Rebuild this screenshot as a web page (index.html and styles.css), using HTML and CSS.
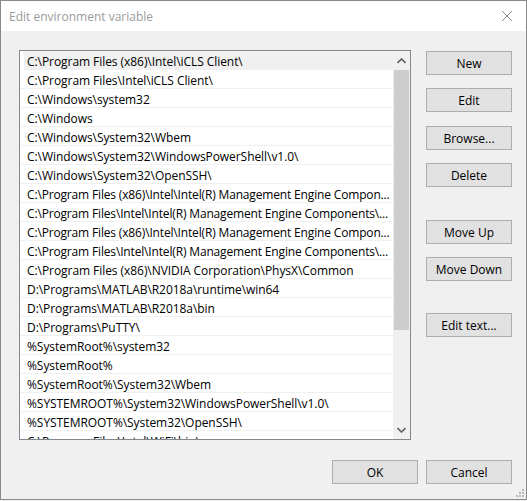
FILE: index.html
```html
<!DOCTYPE html>
<html>
<head>
<meta charset="utf-8">
<link rel="stylesheet" href="styles.css">
</head>
<body>
<div class="window">
  <div class="titlebar">
    <span class="title">Edit environment variable</span>
    <svg class="close" width="12" height="12" viewBox="0 0 12 12"><path d="M1 1 L11 11 M11 1 L1 11" stroke="#8a8a8a" stroke-width="1" fill="none"/></svg>
  </div>
  <div class="content">
    <div class="main">
      <div class="listbox">
        <div class="rows">
          <div class="row sel">C:\Program Files (x86)\Intel\iCLS Client\</div>
          <div class="row">C:\Program Files\Intel\iCLS Client\</div>
          <div class="row">C:\Windows\system32</div>
          <div class="row">C:\Windows</div>
          <div class="row">C:\Windows\System32\Wbem</div>
          <div class="row">C:\Windows\System32\WindowsPowerShell\v1.0\</div>
          <div class="row">C:\Windows\System32\OpenSSH\</div>
          <div class="row tight">C:\Program Files (x86)\Intel\Intel(R) Management Engine Compon...</div>
          <div class="row tight">C:\Program Files\Intel\Intel(R) Management Engine Components\...</div>
          <div class="row tight">C:\Program Files (x86)\Intel\Intel(R) Management Engine Compon...</div>
          <div class="row tight">C:\Program Files\Intel\Intel(R) Management Engine Components\...</div>
          <div class="row">C:\Program Files (x86)\NVIDIA Corporation\PhysX\Common</div>
          <div class="row">D:\Programs\MATLAB\R2018a\runtime\win64</div>
          <div class="row">D:\Programs\MATLAB\R2018a\bin</div>
          <div class="row">D:\Programs\PuTTY\</div>
          <div class="row">%SystemRoot%\system32</div>
          <div class="row">%SystemRoot%</div>
          <div class="row">%SystemRoot%\System32\Wbem</div>
          <div class="row">%SYSTEMROOT%\System32\WindowsPowerShell\v1.0\</div>
          <div class="row">%SYSTEMROOT%\System32\OpenSSH\</div>
          <div class="row">C:\Program Files\Intel\WiFi\bin\</div>
        </div>
        <div class="scrollbar">
          <div class="arrow">
            <svg width="9" height="6" viewBox="0 0 9 6"><path d="M0.5 5 L4.5 1 L8.5 5" stroke="#606060" stroke-width="1.6" fill="none"/></svg>
          </div>
          <div class="track">
            <div class="thumb"></div>
          </div>
          <div class="arrow">
            <svg width="9" height="6" viewBox="0 0 9 6"><path d="M0.5 1 L4.5 5 L8.5 1" stroke="#606060" stroke-width="1.6" fill="none"/></svg>
          </div>
        </div>
      </div>
      <div class="side">
        <button class="btn">New</button>
        <button class="btn g13">Edit</button>
        <button class="btn g14">Browse...</button>
        <button class="btn g13">Delete</button>
        <button class="btn g33">Move Up</button>
        <button class="btn g13">Move Down</button>
        <button class="btn g32">Edit text...</button>
      </div>
    </div>
    <div class="footer">
      <button class="btn">OK</button>
      <button class="btn">Cancel</button>
    </div>
    <div class="grip">
      <svg width="8" height="8" viewBox="0 0 8 8" fill="#b8b8b8">
        <rect x="6" y="0" width="2" height="2"/>
        <rect x="3" y="3" width="2" height="2"/><rect x="6" y="3" width="2" height="2"/>
        <rect x="0" y="6" width="2" height="2"/><rect x="3" y="6" width="2" height="2"/><rect x="6" y="6" width="2" height="2"/>
      </svg>
    </div>
  </div>
</div>
</body>
</html>
```
FILE: styles.css
```css
* { box-sizing: border-box; }
html, body { margin: 0; padding: 0; background: #f0f0f0; }
body { font-family: "Segoe UI", "Open Sans", "Noto Sans", sans-serif; font-size: 12px; color: #000; }
.window {
  width: 527px; height: 500px;
  border: 1px solid #8a8a8a;
  background: #f0f0f0;
  display: flex; flex-direction: column;
}
.titlebar {
  height: 30px; background: #fff;
  display: flex; align-items: center; justify-content: space-between;
  padding: 0 13px 0 8px;
}
.title { color: #9b9b9b; font-size: 12px; }
.close { display: block; }
.content {
  flex: 1; position: relative;
  padding: 19px 14px 0 18px;
  display: flex; flex-direction: column;
}
.main { display: flex; }
.listbox {
  width: 392px; height: 390px;
  border: 1px solid #828790;
  background: #fff;
  display: flex; overflow: hidden;
}
.rows { flex: 1; overflow: hidden; }
.row {
  height: 19px; line-height: 17px;
  padding-top: 2px;
  border-bottom: 1px solid #f0f0f0;
  padding-left: 7px;
  letter-spacing: -0.06px;
  white-space: nowrap; overflow: hidden;
}
.row.tight { letter-spacing: -0.16px; }
.row.sel { background: #f0f0f0; margin-left: 4px; padding-left: 3px; }
.scrollbar { width: 17px; display: flex; flex-direction: column; background: #f0f0f0; }
.arrow { height: 19px; display: flex; align-items: center; justify-content: center; }
.track { flex: 1; }
.thumb { height: 260px; margin: 0 1px; background: #cdcdcd; }
.side { display: flex; flex-direction: column; margin-left: 15px; padding-top: 1px; }
.btn {
  width: 86px; height: 24px;
  background: #e1e1e1; border: 1px solid #adadad;
  font-family: inherit; font-size: 12px; color: #000;
  padding: 0; margin: 0;
}
.g13 { margin-top: 13px; }
.g14 { margin-top: 14px; }
.g33 { margin-top: 33px; }
.g32 { margin-top: 32px; }
.footer { display: flex; justify-content: flex-end; gap: 8px; margin-top: 20px; }
.grip { position: absolute; right: 2px; bottom: 2px; line-height: 0; }
```
